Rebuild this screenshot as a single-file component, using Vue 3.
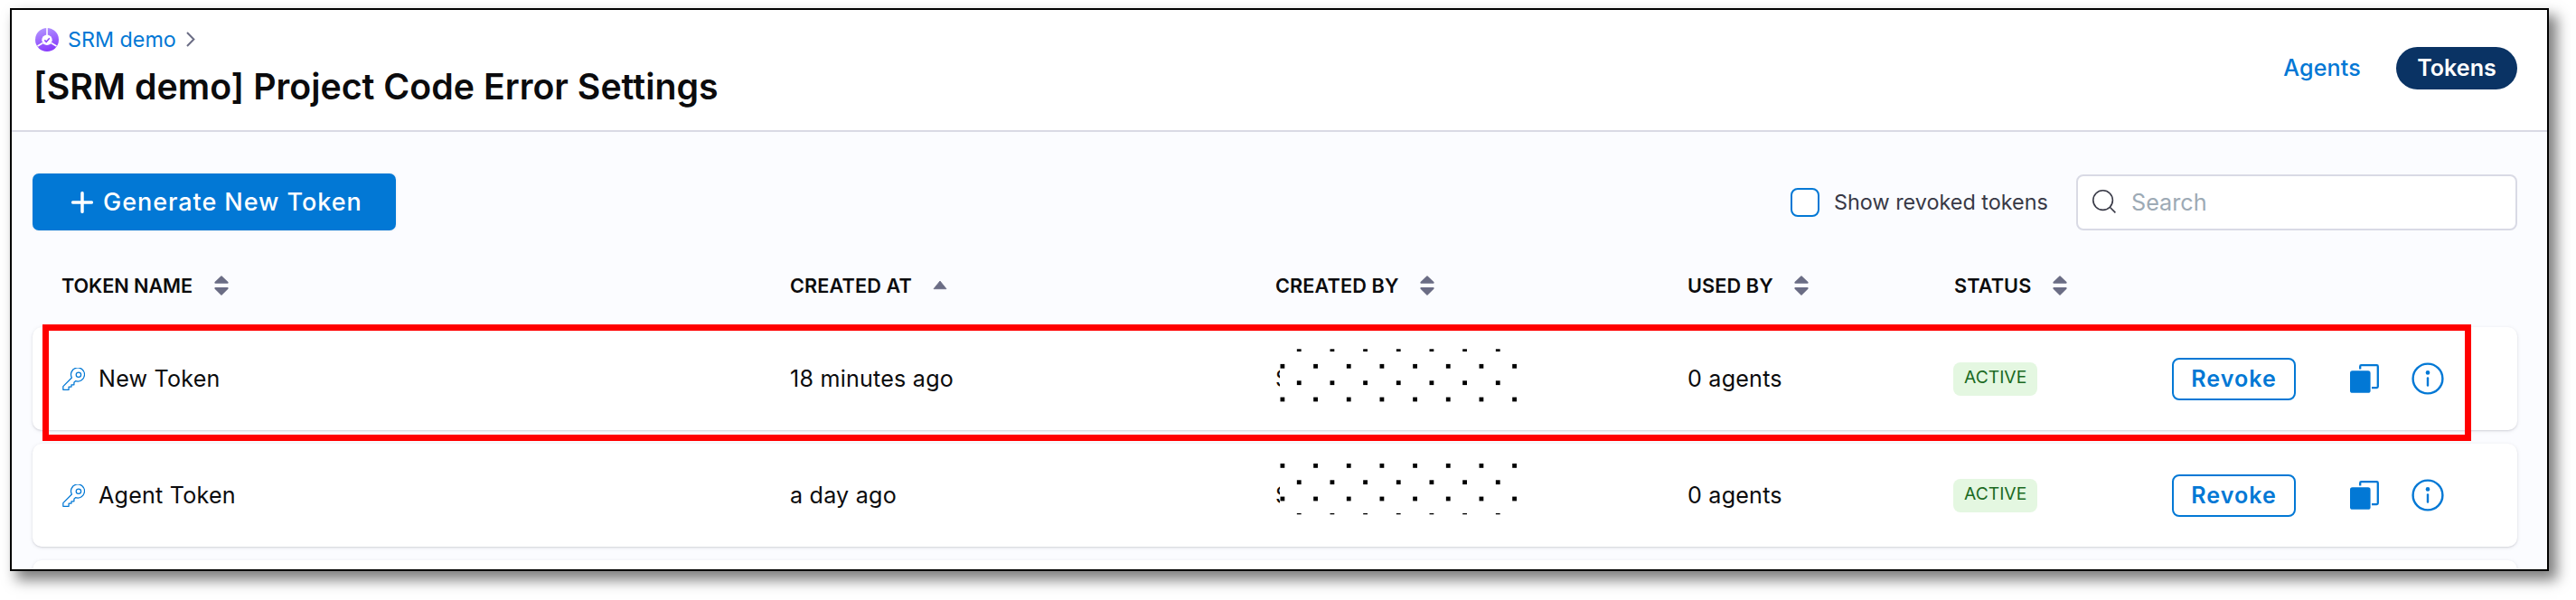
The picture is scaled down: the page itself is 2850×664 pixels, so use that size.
<script setup>
const columns = [
  { label: 'TOKEN NAME', sort: 'both' },
  { label: 'CREATED AT', sort: 'asc' },
  { label: 'CREATED BY', sort: 'both' },
  { label: 'USED BY', sort: 'both' },
  { label: 'STATUS', sort: 'both' },
]

// Redaction pattern: 262x114 area, staggered squares plus one thin clipped line.
const STEP = 36.67
function pattern(lines, strip) {
  const out = []
  lines.forEach(({ y, shifted }) => {
    const count = shifted ? 7 : 8
    for (let i = 0; i < count; i++) {
      out.push({ x: 0.5 + (shifted ? STEP / 2 : 0) + i * STEP, y: y - 2.4, h: 4.8 })
    }
  })
  for (let i = 0; i < 7; i++) out.push({ x: 0.5 + STEP / 2 + i * STEP, y: strip.y, h: strip.h })
  return out
}

const tokens = [
  {
    name: 'New Token',
    created: '18 minutes ago',
    used: '0 agents',
    dots: pattern(
      [{ y: 43.3 }, { y: 61.7, shifted: true }, { y: 80 }],
      { y: 24.3, h: 2.7 },
    ),
  },
  {
    name: 'Agent Token',
    created: 'a day ago',
    used: '0 agents',
    dots: pattern(
      [{ y: 24.4 }, { y: 42.7, shifted: true }, { y: 61 }],
      { y: 77, h: 1.3 },
    ),
  },
]
</script>

<template>
  <div class="page">
    <div class="frame">
      <header class="header">
        <div class="heading">
          <nav class="crumbs">
            <svg class="logo" viewBox="0 0 26 26">
              <defs>
                <linearGradient id="srm" x1="0" y1="0" x2="0.3" y2="1">
                  <stop offset="0" stop-color="#b59bff" />
                  <stop offset="1" stop-color="#8a3ffc" />
                </linearGradient>
              </defs>
              <circle cx="13" cy="13" r="13" fill="url(#srm)" />
              <path d="M13 0V8M8.5 16.5L2.5 20M17.5 16.5L23.5 20" stroke="#fff" stroke-width="1.6" />
              <circle cx="13" cy="13.2" r="5.7" fill="#fff" />
              <path d="M10.3 13.4l1.9 1.9 3.6-4" fill="none" stroke="#8f4dfc" stroke-width="1.6" />
            </svg>
            <a class="crumb">SRM demo</a>
            <svg class="chev" viewBox="0 0 10 17">
              <path d="M1 1l7.4 7.5L1 16" fill="none" stroke="#6b6d85" stroke-width="2" />
            </svg>
          </nav>
          <h1 class="title">[SRM demo] Project Code Error Settings</h1>
        </div>
        <div class="tabs">
          <a class="tab">Agents</a>
          <a class="tab active">Tokens</a>
        </div>
      </header>

      <main class="content">
        <div class="toolbar">
          <button class="generate">
            <svg class="plus" viewBox="0 0 24 24">
              <path d="M12 1.7V22.3M1.7 12H22.3" stroke="#fff" stroke-width="3.5" stroke-linecap="round" />
            </svg>
            <span>Generate New Token</span>
          </button>
          <div class="filters">
            <span class="box"></span>
            <span class="show">Show revoked tokens</span>
            <div class="search">
              <svg class="lens" viewBox="0 0 26 26">
                <circle cx="11.6" cy="11.6" r="10.8" fill="none" stroke="#383946" stroke-width="1.6" />
                <path d="M19.3 19.3L25.4 25.4" stroke="#383946" stroke-width="1.6" />
              </svg>
              <span>Search</span>
            </div>
          </div>
        </div>

        <div class="grid thead">
          <div v-for="c in columns" :key="c.label" class="th">
            <span>{{ c.label }}</span>
            <svg v-if="c.sort === 'both'" class="sort" viewBox="0 0 16 22">
              <path d="M8 1.1L14.8 7.6V8H1.2V7.6zM8 20.9L14.8 14.2V13.8H1.2V14.2z" fill="#6b6d85" stroke="#6b6d85" stroke-width="1.6" stroke-linejoin="round" />
            </svg>
            <svg v-else class="sort" viewBox="0 0 16 22">
              <path d="M8 6L15 14.7H1z" fill="#6b6d85" stroke="#6b6d85" stroke-width=".8" stroke-linejoin="round" />
            </svg>
          </div>
        </div>

        <div v-for="t in tokens" :key="t.name" class="grid row">
          <div class="name">
            <svg class="key" viewBox="0 0 24 24" fill="none" stroke="#0278d5" stroke-width="1.2" stroke-linejoin="round">
              <circle cx="17.2" cy="7.4" r="2.6" />
              <path d="M10 10.6A7.2 7.2 0 1 1 14 14L12.4 15.6V18H9.6V20.2H6.8V23.3H.8V19.8z" />
            </svg>
            <span>{{ t.name }}</span>
          </div>
          <div>{{ t.created }}</div>
          <div class="author">
            <span>S</span>
            <svg class="dots" viewBox="0 0 262 114">
              <rect v-for="(d, i) in t.dots" :key="i" :x="d.x" :y="d.y" width="4.8" :height="d.h" />
            </svg>
          </div>
          <div>{{ t.used }}</div>
          <div><span class="badge">ACTIVE</span></div>
          <div class="actions">
            <button class="revoke">Revoke</button>
            <svg class="copy" viewBox="0 0 32 32">
              <path d="M11.2 5.6V2.5Q11.2 1.2 12.5 1.2H29.5Q30.8 1.2 30.8 2.5V24.8Q30.8 26.1 29.5 26.1H24" fill="none" stroke="#0278d5" stroke-width="2.3" />
              <rect x="0" y="7.3" width="22.6" height="24.5" rx="2.6" fill="#0278d5" />
            </svg>
            <svg class="info" viewBox="0 0 36 36">
              <circle cx="18" cy="18" r="16.4" fill="none" stroke="#0278d5" stroke-width="2.4" />
              <circle cx="18" cy="11.4" r="2.3" fill="#0278d5" />
              <path d="M18 17.4V25.6" stroke="#0278d5" stroke-width="2.4" stroke-linecap="round" />
            </svg>
          </div>
        </div>
        <div class="grid row"></div>
      </main>
    </div>
    <div class="highlight"></div>
  </div>
</template>

<style>
body { background: #fff; }
</style>

<style scoped>
.page {
  position: relative;
  box-sizing: border-box;
  width: 2850px;
  height: 664px;
  padding: 9px 30px 0 11px;
  overflow: hidden;
  font-family: Inter, "Liberation Sans", sans-serif;
  color: #0b0b0d;
  white-space: nowrap;
}
.frame {
  box-sizing: border-box;
  width: 2809px;
  height: 623px;
  border: 2px solid #000;
  background: #fbfcff;
  overflow: hidden;
  box-shadow: 8px 9px 14px 1px rgba(0, 0, 0, 0.5);
}
.header {
  box-sizing: border-box;
  height: 135px;
  display: flex;
  justify-content: space-between;
  padding: 0 33px 0 24px;
  background: #fff;
  border-bottom: 2px solid #d9dae5;
}
.heading { padding-top: 17px; }
.crumbs {
  display: flex;
  align-items: center;
  height: 31px;
  padding-left: 2px;
  font-size: 23.3px;
  line-height: 31px;
  color: #0278d5;
}
.logo { width: 26px; height: 26px; margin-right: 10px; }
.chev { width: 10px; height: 17px; margin-left: 11px; }
.title {
  margin: 13px 0 0;
  font-size: 39.3px;
  line-height: 48px;
  font-weight: 600;
}
.tabs {
  display: flex;
  align-items: center;
  height: 47px;
  margin-top: 41px;
  font-size: 25.1px;
  line-height: 47px;
}
.tab { color: #0278d5; font-weight: 500; letter-spacing: 0.15px; }
.tab.active {
  box-sizing: border-box;
  width: 134px;
  margin-left: 39px;
  text-align: center;
  border-radius: 24px;
  background: #0a3364;
  color: #fff;
  font-weight: 600;
  letter-spacing: 0;
}
.content { padding: 46px 33px 0 23px; }
.toolbar {
  display: flex;
  justify-content: space-between;
  height: 63px;
}
.generate {
  box-sizing: border-box;
  display: flex;
  align-items: center;
  width: 402px;
  height: 63px;
  padding: 0 0 0 43px;
  border: 0;
  border-radius: 7px;
  background: #0278d5;
  color: #fff;
  font: 500 27px Inter, "Liberation Sans", sans-serif;
  letter-spacing: 0.95px;
  box-shadow: 0 0 3px rgba(40, 41, 61, 0.1);
}
.plus { width: 24px; height: 24px; margin-right: 11px; }
.filters {
  display: flex;
  align-items: center;
  height: 63px;
  font-size: 23.4px;
  color: #383946;
}
.box {
  box-sizing: border-box;
  width: 32px;
  height: 32px;
  border: 2px solid #0278d5;
  border-radius: 8px;
  background: #fff;
}
.show { width: 268px; margin-left: 16px; }
.search {
  box-sizing: border-box;
  display: flex;
  align-items: center;
  width: 488px;
  height: 62px;
  padding: 1px 0 0 16px;
  border: 2px solid #d9dae5;
  border-radius: 8px;
  background: #fff;
  font-size: 25.2px;
  color: #9daab5;
}
.lens { width: 26px; height: 26px; margin: 0 17px 2px 0; }
.grid {
  display: grid;
  grid-template-columns: 806px 537px 456px 294px 242px 1fr;
  align-items: center;
  padding-left: 32px;
}
.thead {
  height: 92px;
  padding-top: 15px;
  font-size: 21.7px;
  font-weight: 600;
}
.th { display: flex; align-items: center; letter-spacing: 0.1px; }
.th:first-child { letter-spacing: -0.1px; }
.th:last-child { padding-left: 1px; }
.sort { width: 16px; height: 22px; margin-left: 23.5px; }
.row {
  height: 114px;
  margin-bottom: 15px;
  border-radius: 10px;
  background: #fff;
  font-size: 25.1px;
  letter-spacing: 0.22px;
  box-shadow: 0 1px 2px rgba(96, 97, 112, 0.2), 0 1px 5px rgba(40, 41, 61, 0.08);
}
.row > div { line-height: 38px; }
.name { display: flex; align-items: center; }
.key { width: 25px; height: 25px; margin: 0 15px 0 1px; }
.author { display: flex; align-items: center; height: 114px; }
.author span { width: 5px; }
.dots { width: 262px; height: 114px; background: #fff; z-index: 1; }
.row .badge {
  display: block;
  box-sizing: border-box;
  width: 93px;
  height: 37px;
  padding-left: 12px;
  border-radius: 8px;
  background: #e4f7e1;
  color: #1b6a22;
  font-size: 19.3px;
  line-height: 32px;
  letter-spacing: 0;
}
.actions { display: flex; align-items: center; }
.revoke {
  box-sizing: border-box;
  width: 137px;
  height: 47px;
  padding: 0;
  border: 2px solid #0278d5;
  border-radius: 8px;
  background: #fff;
  color: #0278d5;
  font: 600 25.1px Inter, "Liberation Sans", sans-serif;
  letter-spacing: 1px;
}
.copy { width: 32px; height: 32px; margin: 0 0 0 60px; }
.info { width: 36px; height: 36px; margin-left: 36px; }
.highlight {
  position: absolute;
  z-index: 2;
  box-sizing: border-box;
  left: 47px;
  top: 359px;
  width: 2687px;
  height: 129px;
  border: 7px solid #f00;
}
</style>
